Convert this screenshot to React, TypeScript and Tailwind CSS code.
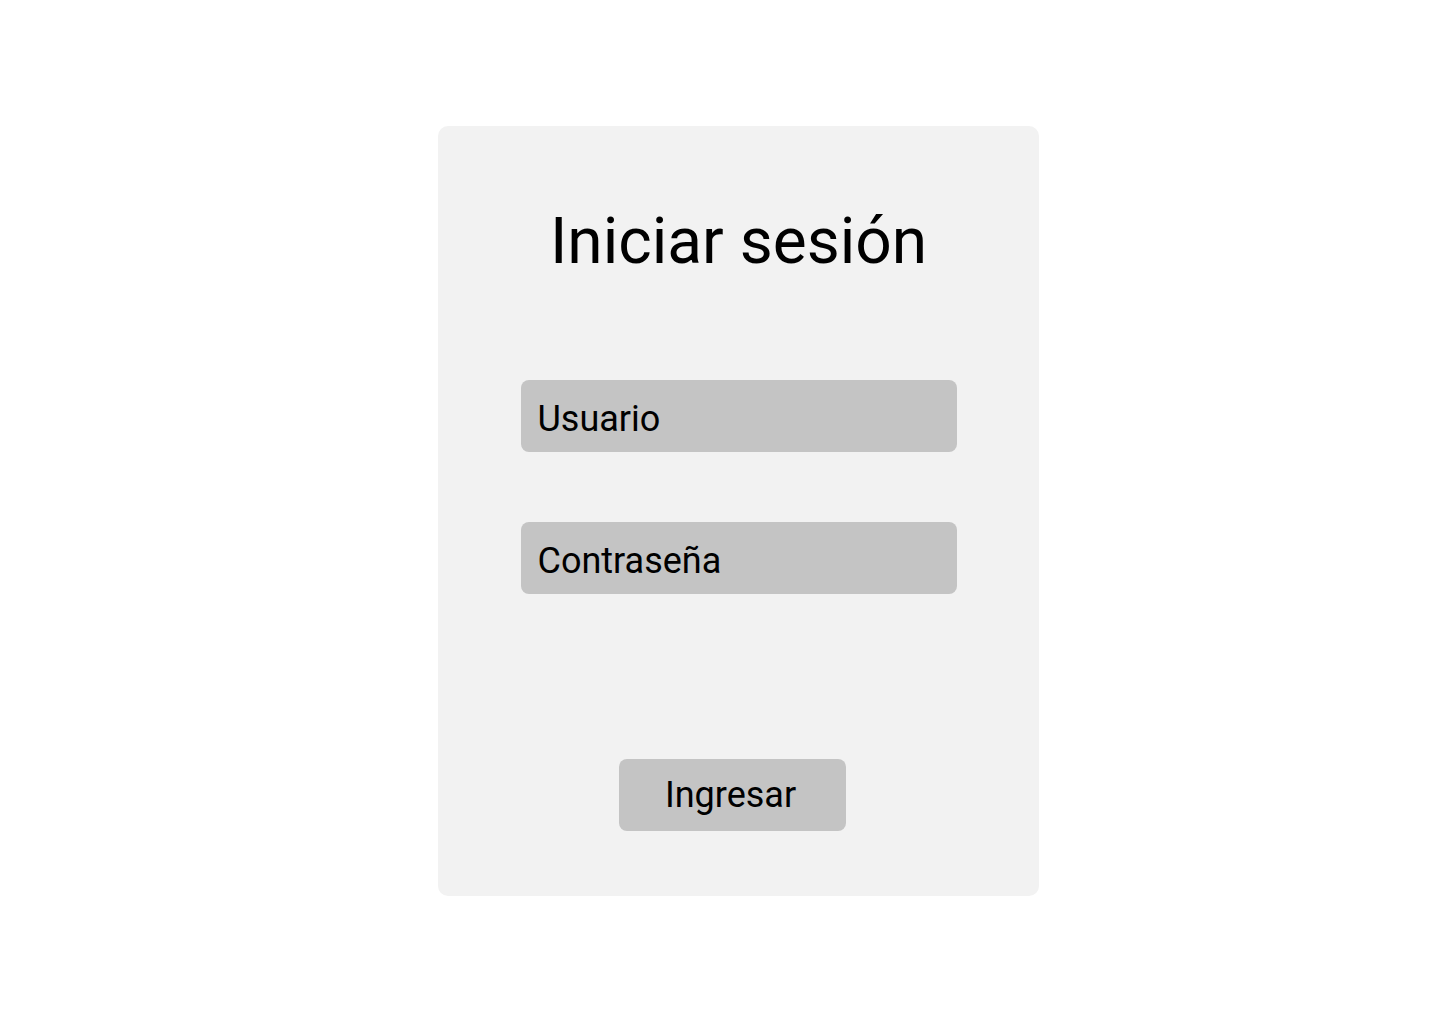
import { useState } from 'react';

export default function App() {
  const [user, setUser] = useState('');
  const [pass, setPass] = useState('');

  return (
    <div className="min-h-screen w-full bg-white flex justify-center pl-[37px] pt-[126px]" style={{ fontFamily: 'Roboto, "Noto Sans", sans-serif' }}>
      <div className="w-[601px] h-[770px] bg-[#f2f2f2] rounded-[10px] flex flex-col items-center pt-[78px]">
        <h1 className="text-[64px] leading-[75px] font-normal text-black">Iniciar sesión</h1>

        <div className="mt-[101px] flex flex-col gap-[70px]">
          <input
            value={user}
            onChange={(e) => setUser(e.target.value)}
            placeholder="Usuario"
            className="w-[436px] h-[72px] rounded-[8px] bg-[#c4c4c4] pl-[17px] pt-[5px] text-[36px] text-black placeholder:text-black outline-none"
          />
          <input
            type="password"
            value={pass}
            onChange={(e) => setPass(e.target.value)}
            placeholder="Contraseña"
            className="w-[436px] h-[72px] rounded-[8px] bg-[#c4c4c4] pl-[17px] pt-[5px] text-[36px] text-black placeholder:text-black outline-none"
          />
        </div>

        <button className="mt-[165px] mr-[12px] w-[227px] h-[72px] rounded-[8px] bg-[#c4c4c4] pr-[4px] text-[36px] text-black">
          Ingresar
        </button>
      </div>
    </div>
  );
}
